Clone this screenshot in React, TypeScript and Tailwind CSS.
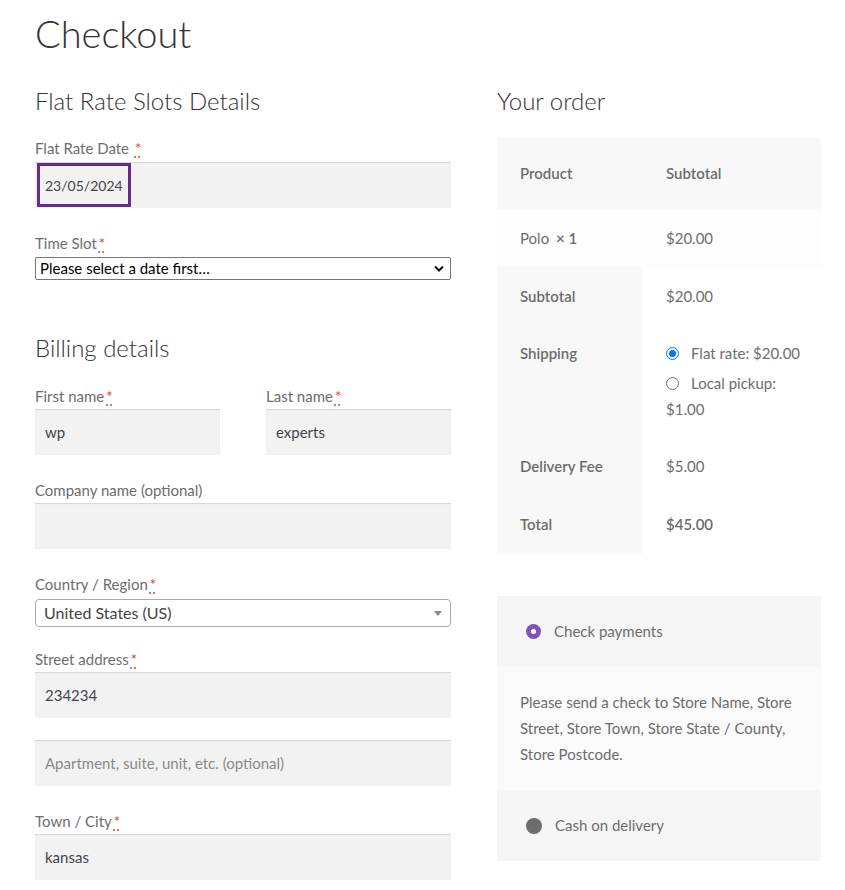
import type { ReactNode } from 'react';

const font = { fontFamily: 'Lato, "Open Sans", sans-serif' };

function Req() {
  return (
    <span className="ml-[2px] text-[#e2401c] underline decoration-dotted decoration-[#e2401c] underline-offset-[3px]">
      *
    </span>
  );
}

function Label({ children, required }: { children: ReactNode; required?: boolean }) {
  return (
    <div className="h-[26px] text-[15px] leading-[26px] text-[#6d6d6d]">
      {children}
      {required && <Req />}
    </div>
  );
}

function Field({ value, placeholder, className = '' }: { value?: string; placeholder?: string; className?: string }) {
  return (
    <div
      className={`flex h-[46px] items-center bg-[#f2f2f2] px-[10px] text-[15px] shadow-[inset_0_1px_1px_rgba(0,0,0,0.125)] ${className}`}
    >
      {value ? (
        <span className="text-[#43454b]">{value}</span>
      ) : (
        <span className="text-[#8a8a8a]">{placeholder}</span>
      )}
    </div>
  );
}

function Radio({ checked }: { checked?: boolean }) {
  return checked ? (
    <span className="flex h-[13px] w-[13px] items-center justify-center rounded-full border-[1.5px] border-[#0075ff]">
      <span className="h-[7px] w-[7px] rounded-full bg-[#0075ff]" />
    </span>
  ) : (
    <span className="h-[13px] w-[13px] rounded-full border border-[#767676] bg-white" />
  );
}

export default function App() {
  return (
    <div className="min-h-screen bg-white px-[35px] pt-[9px]" style={font}>
      <h1 className="text-[38px] font-light leading-[48px] text-[#333333]">Checkout</h1>

      <div className="mt-[27px] flex gap-[46px]">
        {/* left column */}
        <div className="w-[416px]">
          <h3 className="text-[24px] font-light leading-[34px] text-[#333333]">Flat Rate Slots Details</h3>

          <div className="mt-[17px]">
            <Label required>Flat Rate Date </Label>
            <div className="mt-[1px] flex h-[46px] items-center bg-[#f2f2f2] pl-[2px] shadow-[inset_0_1px_1px_rgba(0,0,0,0.125)]">
              <div className="flex h-[44px] w-[94px] items-center border-[3px] border-[#652c90] pl-[5px] text-[14px] text-[#43454b]">
                23/05/2024
              </div>
            </div>
          </div>

          <div className="mt-[22px]">
            <Label required>Time Slot</Label>
            <div className="mt-[1px] flex h-[23px] items-center justify-between rounded-[2px] border border-[#767676] pl-[4px] pr-[6px] text-[15px] text-black">
              <span>Please select a date first…</span>
              <svg width="10" height="7" viewBox="0 0 10 7">
                <path d="M1 1.5 L5 5.5 L9 1.5" fill="none" stroke="#111" strokeWidth="2" />
              </svg>
            </div>
          </div>

          <h3 className="mt-[51px] text-[24px] font-light leading-[34px] text-[#333333]">Billing details</h3>

          <div className="mt-[18px] flex gap-[46px]">
            <div className="w-[185px]">
              <Label required>First name</Label>
              <Field value="wp" className="h-[45px]" />
            </div>
            <div className="w-[185px]">
              <Label required>Last name</Label>
              <Field value="experts" className="h-[45px]" />
            </div>
          </div>

          <div className="mt-[22px]">
            <Label>Company name (optional)</Label>
            <Field />
          </div>

          <div className="mt-[22px]">
            <Label required>Country / Region</Label>
            <div className="mt-[2px] flex h-[28px] items-center justify-between rounded-[4px] border border-[#aaaaaa] pl-[8px] pr-[8px] text-[16px] text-[#444444]">
              <span>United States (US)</span>
              <span className="h-0 w-0 border-x-[4px] border-t-[5px] border-x-transparent border-t-[#888888]" />
            </div>
          </div>

          <div className="mt-[19px]">
            <Label required>Street address</Label>
            <Field value="234234" className="h-[45px]" />
            <Field placeholder="Apartment, suite, unit, etc. (optional)" className="mt-[22px]" />
          </div>

          <div className="mt-[22px]">
            <Label required>Town / City</Label>
            <Field value="kansas" />
          </div>
        </div>

        {/* right column */}
        <div className="w-[324px]">
          <h3 className="text-[24px] font-light leading-[34px] text-[#333333]">Your order</h3>

          <div className="mt-[20px] text-[15px] text-[#6d6d6d]">
            <div className="grid h-[71px] grid-cols-[146px_178px] items-center bg-[#f8f8f8] font-semibold">
              <div className="pl-[23px]">Product</div>
              <div className="pl-[23px]">Subtotal</div>
            </div>
            <div className="grid h-[58px] grid-cols-[146px_178px] items-center bg-[#fdfdfd]">
              <div className="pl-[23px]">
                Polo <span className="ml-[3px] font-semibold">× 1</span>
              </div>
              <div className="pl-[23px]">$20.00</div>
            </div>
            <div className="grid grid-cols-[146px_178px]">
              <div className="flex h-[58px] items-center bg-[#f8f8f8] pl-[23px] font-semibold">Subtotal</div>
              <div className="flex h-[58px] items-center pl-[23px]">$20.00</div>

              <div className="h-[112px] bg-[#f8f8f8] pl-[23px] pt-[15px] font-semibold leading-[26px]">Shipping</div>
              <div className="h-[112px] pl-[23px] pt-[15px] leading-[26px]">
                <div className="flex h-[26px] items-center gap-[12px]">
                  <Radio checked />
                  <span>Flat rate: $20.00</span>
                </div>
                <div className="mt-[4px] flex h-[26px] items-center gap-[12px]">
                  <Radio />
                  <span>Local pickup:</span>
                </div>
                <div className="h-[27px] leading-[26px]">$1.00</div>
              </div>

              <div className="flex h-[58px] items-center bg-[#f8f8f8] pl-[23px] font-semibold">Delivery Fee</div>
              <div className="flex h-[58px] items-center pl-[23px]">$5.00</div>

              <div className="flex h-[58px] items-center bg-[#f8f8f8] pl-[23px] font-semibold">Total</div>
              <div className="flex h-[58px] items-center pl-[23px] font-semibold">$45.00</div>
            </div>
          </div>

          <div className="mt-[43px] text-[15px] text-[#6d6d6d]">
            <div className="flex h-[71px] items-center gap-[13px] bg-[#f5f5f5] pl-[29px]">
              <span className="flex h-[15px] w-[15px] items-center justify-center rounded-full bg-[#7f54b3]">
                <span className="h-[5px] w-[5px] rounded-full bg-white" />
              </span>
              <span>Check payments</span>
            </div>
            <div className="h-[123px] bg-[#fafafa] px-[23px] pt-[22px] leading-[26px]">
              Please send a check to Store Name, Store Street, Store Town, Store State / County, Store Postcode.
            </div>
            <div className="flex h-[71px] items-center gap-[13px] bg-[#f5f5f5] pl-[29px]">
              <span className="h-[16px] w-[16px] rounded-full bg-[#6d6d6d]" />
              <span>Cash on delivery</span>
            </div>
          </div>
        </div>
      </div>
    </div>
  );
}
